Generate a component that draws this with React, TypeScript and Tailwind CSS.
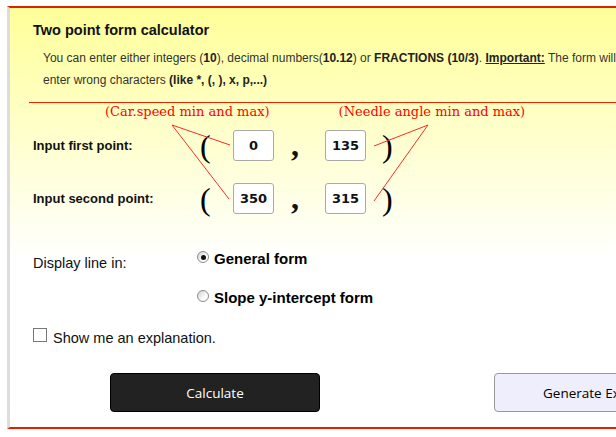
import React from 'react';

const arial = "font-['Liberation_Sans',Arial,sans-serif]";

function Radio({ checked }: { checked?: boolean }) {
  return (
    <span className="mt-[1px] flex h-[12px] w-[12px] shrink-0 items-center justify-center rounded-full border border-[#8a8a8a] bg-[linear-gradient(135deg,#d4d4d4,#ffffff_70%)]">
      {checked && <span className="h-[5px] w-[5px] rounded-full bg-[#111]" />}
    </span>
  );
}

function NumBox({ value }: { value: string }) {
  return (
    <div className="flex h-[31px] w-[41px] items-center justify-center rounded-[3px] border border-[#a9a9a9] bg-white font-['DejaVu_Sans',sans-serif] text-[13px] font-bold text-[#111]">
      {value}
    </div>
  );
}

function PointRow({ label, x, y }: { label: string; x: string; y: string }) {
  return (
    <div className="flex h-[31px] items-center">
      <div className={`w-[167px] text-[13px] font-bold text-[#111] ${arial}`}>{label}</div>
      <div className="w-[33px] font-['Liberation_Serif',serif] text-[32px] leading-none text-black">(</div>
      <NumBox value={x} />
      <div className="flex h-[31px] w-[51px] items-end pb-[4px] pl-[17px] font-['Liberation_Serif',serif] text-[32px] font-bold leading-[24px] text-[#111]">
        ,
      </div>
      <NumBox value={y} />
      <div className="ml-[16px] font-['Liberation_Serif',serif] text-[32px] leading-none text-black">)</div>
    </div>
  );
}

export default function App() {
  return (
    <div className="relative h-[437px] w-[616px] overflow-hidden bg-white pl-[7px] pt-[6px]">
      <div className="h-[423px] w-[780px] border-b-2 border-l-[3px] border-t-2 border-[#dd2200] border-l-[#dcdcdc] bg-[linear-gradient(to_bottom,#ffff99,#ffffff_250px)] pl-[23px]">
        <div className={`mt-[13px] text-[14.5px] font-bold leading-[18px] text-[#111] ${arial}`}>
          Two point form calculator
        </div>
        <div className={`ml-[10px] mt-[8px] whitespace-nowrap text-[12px] leading-[22px] text-[#333] ${arial}`}>
          <div>
            You can enter either integers (<b className="text-[#222]">10</b>), decimal numbers(
            <b className="text-[#222]">10.12</b>) or <b className="text-[#222]">FRACTIONS (10/3)</b>.{' '}
            <b className="text-[#222] underline">Important:</b> The form will not work if you
          </div>
          <div>
            enter wrong characters <b className="text-[#222]">(like *, (, ), x, p,...)</b>
          </div>
        </div>
        <div className="ml-[-4px] mt-[11px] border-t border-[#ee2200]" />

        <div className="flex h-[18px] items-center font-['DejaVu_Serif',serif] text-[13px] text-[#ff0000]">
          <span className="ml-[72px]">(Car.speed min and max)</span>
          <span className="ml-[69px]">(Needle angle min and max)</span>
        </div>

        <div className="mt-[9px]">
          <PointRow label="Input first point:" x="0" y="135" />
        </div>
        <div className="mt-[22px]">
          <PointRow label="Input second point:" x="350" y="315" />
        </div>

        <div className="mt-[36px] flex">
          <div className={`mt-[4px] w-[164px] text-[14.5px] leading-[18px] text-[#111] ${arial}`}>Display line in:</div>
          <div className="flex flex-col gap-[21px]">
            <label className="flex items-start gap-[5px]">
              <Radio checked />
              <span className={`text-[15px] font-bold leading-[18px] text-black ${arial}`}>General form</span>
            </label>
            <label className="flex items-start gap-[5px]">
              <Radio />
              <span className={`text-[15px] font-bold leading-[18px] text-black ${arial}`}>Slope y-intercept form</span>
            </label>
          </div>
        </div>

        <label className="mt-[22px] flex items-start gap-[6px]">
          <span className="mt-[-1px] h-[14px] w-[14px] shrink-0 border border-[#777] bg-white" />
          <span className={`text-[14.5px] leading-[18px] text-[#111] ${arial}`}>Show me an explanation.</span>
        </label>

        <div className="ml-[77px] mt-[26px] flex">
          <button className="flex h-[39px] w-[210px] items-center justify-center rounded-[4px] border border-black bg-[#222222] pt-[2px] font-['Open_Sans',sans-serif] text-[13.5px] text-white">
            Calculate
          </button>
          <button className="ml-[174px] flex h-[39px] w-[210px] items-center justify-center rounded-[4px] border border-[#999] bg-[#eeeefc] pl-[4px] pt-[2px] font-['Open_Sans',sans-serif] text-[13.5px] text-black">
            Generate Example
          </button>
        </div>
      </div>

      <svg className="pointer-events-none absolute left-0 top-0" width="616" height="437">
        <g stroke="#ff2a2a" strokeWidth="1" fill="none">
          <line x1="172" y1="125" x2="230" y2="145" />
          <line x1="172" y1="125" x2="229" y2="199" />
          <line x1="428" y1="125" x2="374" y2="146" />
          <line x1="428" y1="125" x2="374" y2="201" />
        </g>
      </svg>
    </div>
  );
}
